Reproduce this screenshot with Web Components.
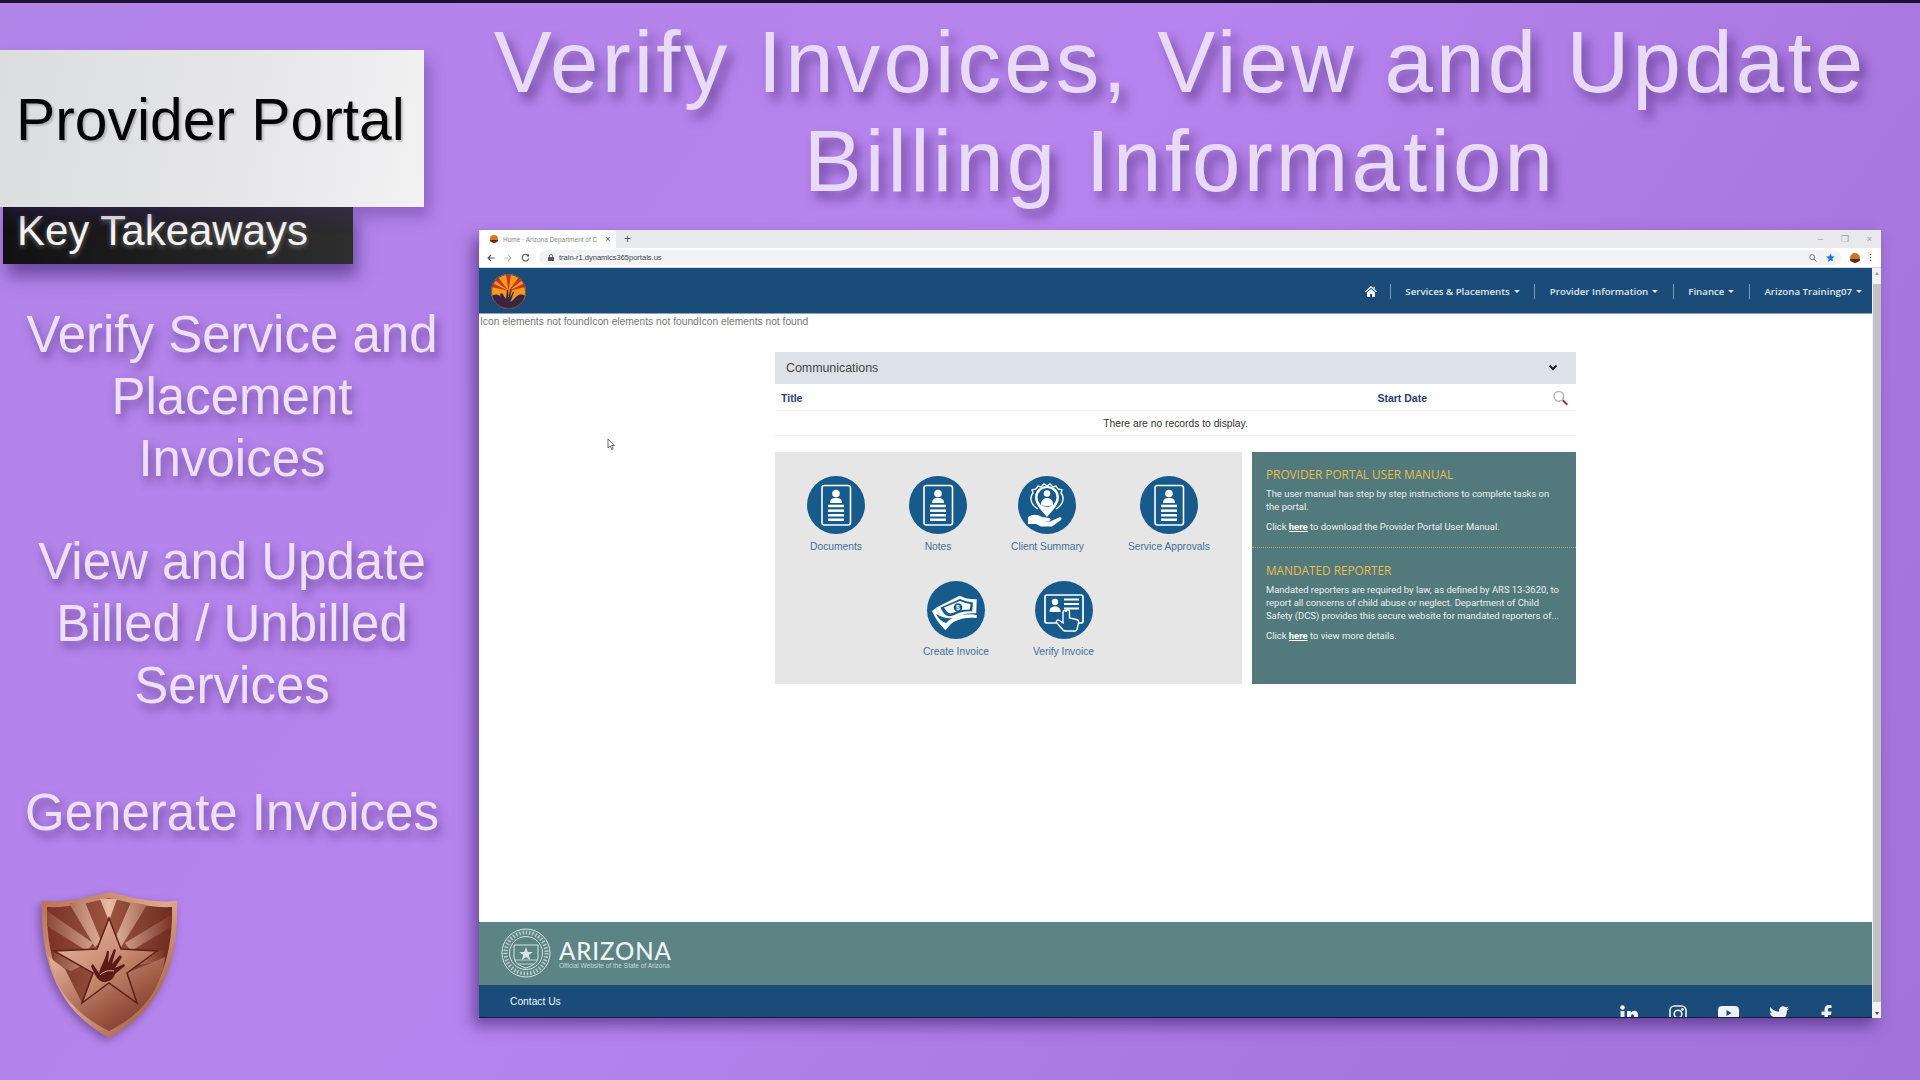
<!DOCTYPE html>
<html lang="en">
<head>
<meta charset="utf-8">
<title>Provider Portal - Verify Invoices</title>
<style>
  html, body { margin: 0; padding: 0; }
  body { width: 1920px; height: 1080px; overflow: hidden; font-family: "Liberation Sans", Arial, sans-serif; }
</style>
</head>
<body>
<slide-page>
  <brand-card slot="side"></brand-card>
  <takeaway-list slot="side">
    <p>Verify Service and<br>Placement<br>Invoices</p>
    <p>View and Update<br>Billed / Unbilled<br>Services</p>
    <p>Generate Invoices</p>
  </takeaway-list>
  <dcs-shield slot="side"></dcs-shield>

  <slide-title>Verify Invoices, View and Update<br>Billing Information</slide-title>
  <browser-window>
    <portal-nav></portal-nav>
    <portal-body>
      <comm-panel></comm-panel>
      <div class="row">
        <tile-board>
          <action-tile kind="doc">Documents</action-tile>
          <action-tile kind="doc">Notes</action-tile>
          <action-tile kind="client">Client Summary</action-tile>
          <action-tile kind="doc">Service Approvals</action-tile>
          <action-tile kind="cash">Create Invoice</action-tile>
          <action-tile kind="verify">Verify Invoice</action-tile>
        </tile-board>
        <info-panel></info-panel>
      </div>
    </portal-body>
    <portal-footer></portal-footer>
  </browser-window>
</slide-page>

<script>
class SlidePage extends HTMLElement {
  constructor() {
    super();
    this.attachShadow({ mode: 'open' });
    this.shadowRoot.innerHTML = /* html */ `
    <style>
      :host {
        display: grid;
        grid-template-columns: 464px 1fr;
        width: 1920px;
        height: 1080px;
        box-sizing: border-box;
        border-top: 3px solid #1c1230;
        overflow: hidden;
        background: linear-gradient(125deg, #b184e8 0%, #b684ee 45%, #a877e0 75%, #a273da 100%);
      }
      .side { display: flex; flex-direction: column; align-items: flex-start; }
      .main { display: flex; flex-direction: column; padding: 9px 24px 0 0; }
    </style>
    <div class="side"><slot name="side"></slot></div>
    <div class="main"><slot></slot></div>`;
  }
}

class BrandCard extends HTMLElement {
  constructor() {
    super();
    this.attachShadow({ mode: 'open' });
    this.shadowRoot.innerHTML = /* html */ `
    <style>
      :host { display: block; margin-top: 47px; }
      .top {
        width: 424px; height: 157px; box-sizing: border-box;
        padding: 0 0 18px 16px;
        display: flex; align-items: center;
        position: relative; z-index: 1;
        background: linear-gradient(100deg, #dcdddf 0%, #e6e6e8 55%, #f2f2f3 100%);
        box-shadow: 6px 10px 14px rgba(70, 40, 120, .35);
        color: #050505;
        font-size: 58.8px;
        text-shadow: 2px 2px 2px rgba(0, 0, 0, .2);
      }
      .sub {
        width: 350px; height: 57px; box-sizing: border-box;
        margin-left: 3px;
        padding: 0 0 10px 14px;
        display: flex; align-items: center;
        background: linear-gradient(90deg, #111 0%, #2e2e2e 100%);
        box-shadow: 4px 12px 16px rgba(50, 25, 100, .55);
        color: #f4f4f4;
        font-size: 42px;
        text-shadow: 0 2px 5px rgba(255, 255, 255, .35);
      }
    </style>
    <div class="top">Provider Portal</div>
    <div class="sub">Key Takeaways</div>`;
  }
}

class TakeawayList extends HTMLElement {
  constructor() {
    super();
    this.attachShadow({ mode: 'open' });
    this.shadowRoot.innerHTML = /* html */ `
    <style>
      :host {
        display: block;
        width: 464px;
        margin-top: 40px;
        text-align: center;
        color: #eee0fa;
        font-size: 51px;
        line-height: 62px;
        text-shadow: 3px 6px 10px rgba(60, 30, 100, .55);
      }
      ::slotted(p) { margin: 0 0 41px; }
      ::slotted(p:last-child) { margin: 65px 0 0; }
    </style>
    <slot></slot>`;
  }
}

class DcsShield extends HTMLElement {
  constructor() {
    super();
    this.attachShadow({ mode: 'open' });
    this.shadowRoot.innerHTML = /* html */ `
    <style>
      :host { display: block; margin: 47px 0 0 41px; width: 137px; height: 147px; filter: drop-shadow(-3px 3px 4px rgba(60,30,90,.45)); }
      svg { display: block; }
    </style>
    <svg width="137" height="147" viewBox="0 0 137 147">
      <defs>
        <linearGradient id="rim" x1="0" y1="0" x2="1" y2="1">
          <stop offset="0" stop-color="#b96f52"/><stop offset=".5" stop-color="#e0a88c"/><stop offset="1" stop-color="#8a3f2e"/>
        </linearGradient>
        <linearGradient id="ray" x1="0" y1="0" x2="1" y2="0">
          <stop offset="0" stop-color="#8a4a38"/><stop offset=".5" stop-color="#eabba5"/><stop offset="1" stop-color="#7a3527"/>
        </linearGradient>
        <linearGradient id="dark" x1="0" y1="0" x2="1" y2="0">
          <stop offset="0" stop-color="#7a3324"/><stop offset=".5" stop-color="#9a5540"/><stop offset="1" stop-color="#6e2c20"/>
        </linearGradient>
        <linearGradient id="star" x1="0" y1="0" x2="1" y2="1">
          <stop offset="0" stop-color="#e9bca8"/><stop offset=".55" stop-color="#c98a70"/><stop offset="1" stop-color="#8e4a36"/>
        </linearGradient>
        <linearGradient id="low" x1="0" y1="0" x2="1" y2="1">
          <stop offset="0" stop-color="#e3b39c"/><stop offset=".6" stop-color="#9e5a45"/><stop offset="1" stop-color="#6d2a20"/>
        </linearGradient>
      </defs>
      <path d="M1 10C24 12 45 7 68 1C92 7 113 12 136 10C138 70 122 118 68 147C16 118 -1 70 1 10Z" fill="url(#rim)"/>
      <path d="M6 16C28 17 46 12 68 7C90 12 110 17 131 16C132 70 116 114 68 140C21 114 5 70 6 16Z" fill="url(#dark)"/>
      <path d="M6 20L6 35L46 60L52 52Z M28 12L44 11L60 50L54 56Z M59 8L76 8L68 30Z M90 11L106 14L80 56L74 48Z M130 24L130 36L90 60L84 52Z" fill="url(#ray)"/>
      <path d="M13 62L50 70L30 80L13 72Z M123 58L123 70L98 74L100 68Z" fill="url(#ray)"/>
      <path d="M8 66L24 78L41 112L68 92L96 112L86 82L124 66C120 100 100 124 68 140C36 124 14 100 8 66Z" fill="url(#low)"/>
      <path d="M68 27L80 58L116 60L86 82L96 112L68 92L41 112L52 82L13 60L56 58Z" fill="url(#star)" stroke="#5e1f18" stroke-width="1.500"/>
      <path d="M52 73L58 82C60 74 64 70 66 60L68 60L67 72L73 58L75 59L71 73L79 64L81 66L74 77L83 73L84 75L74 83C72 89 68 91 62 91C56 89 54 84 50 75Z" fill="#5e1a14"/>
      <path d="M59 84C63 80 68 79 73 80" stroke="#e3b39c" stroke-width="1" fill="none"/>
    </svg>`;
  }
}

class SlideTitle extends HTMLElement {
  constructor() {
    super();
    this.attachShadow({ mode: 'open' });
    this.shadowRoot.innerHTML = /* html */ `
    <style>
      :host {
        display: block;
        text-align: center;
        color: #e9dbf8;
        font-size: 87px;
        line-height: 99px;
        letter-spacing: 3.2px;
        text-shadow: 6px 8px 11px rgba(60, 30, 100, .55);
        white-space: nowrap;
      }
    </style>
    <slot></slot>`;
  }
}

class BrowserWindow extends HTMLElement {
  constructor() {
    super();
    this.attachShadow({ mode: 'open' });
    this.shadowRoot.innerHTML = /* html */ `
    <style>
      :host {
        display: flex;
        flex-direction: column;
        width: 1402px;
        height: 788px;
        margin: 20px 0 0 15px;
        position: relative;
        background: #fff;
        box-shadow: -6px 8px 14px rgba(50, 25, 100, .55);
        font-family: "Liberation Sans", Arial, sans-serif;
      }
      .tabs { height: 18px; background: #e7e9ec; display: flex; align-items: stretch; padding-left: 1px; flex: none; }
      .tab {
        width: 136px; box-sizing: border-box; padding-left: 10px;
        display: flex; align-items: center; gap: 5px;
        background: #fff; border-radius: 4px 4px 0 0;
        font-size: 6.5px; color: #8a8a8a; white-space: nowrap;
      }
      .tab b { font-weight: 400; font-size: 9px; margin-left: 3px; color: #444; }
      .plus { margin-left: 8px; align-self: center; font-size: 12px; color: #555; }
      .winbtns { margin-left: auto; display: flex; gap: 18px; align-items: center; padding-right: 9px; color: #9a9a9a; font-size: 9px; }
      .bar { height: 20px; background: #fff; display: flex; align-items: center; flex: none; padding: 0 9px 0 8px; gap: 9px; border-bottom: 1px solid #d5d8dc; box-sizing: border-box; }
      .omni {
        flex: 1; height: 15px; background: #f1f3f4; border-radius: 8px;
        display: flex; align-items: center; gap: 5px; padding: 0 6px 0 9px;
        font-size: 7.5px; color: #444;
      }
      .omni .tail { margin-left: auto; display: flex; gap: 9px; align-items: center; }
      .view { flex: 1; display: flex; min-height: 0; }
      .page { flex: 1; display: flex; flex-direction: column; min-width: 0; }
      .scroll { width: 9px; background: #f1f1f1; display: flex; flex-direction: column; align-items: center; flex: none; }
      .scroll .thumb { width: 8px; height: 718px; margin-top: 9px; background: #c1c1c1; }
      .scroll .up, .scroll .dn { width: 0; height: 0; border-left: 2px solid transparent; border-right: 2px solid transparent; }
      .scroll .up { border-bottom: 3px solid #9a9a9a; margin-top: 4px; }
      .scroll .dn { border-top: 3px solid #505050; margin-top: auto; margin-bottom: 3px; }
    </style>
    <div class="tabs">
      <div class="tab">
        <svg width="8" height="8" viewBox="0 0 8 8"><circle cx="4" cy="4" r="4" fill="#d8741c"/><path d="M0 5h8v1L4 8L0 6Z" fill="#5a2a2a"/></svg>
        <span>Home · Arizona Department of C</span><b>×</b>
      </div>
      <span class="plus">+</span>
      <div class="winbtns"><span>–</span><span>❐</span><span>×</span></div>
    </div>
    <div class="bar">
      <svg width="8" height="8" viewBox="0 0 8 8"><path d="M7.500 4H1M4 1L1 4l3 3" stroke="#555" stroke-width="1.100" fill="none"/></svg>
      <svg width="8" height="8" viewBox="0 0 8 8"><path d="M.5 4H7M4 1l3 3-3 3" stroke="#bbb" stroke-width="1.100" fill="none"/></svg>
      <svg width="9" height="9" viewBox="0 0 9 9"><path d="M7.500 3A3.300 3.300 0 1 0 7.800 5.500" stroke="#555" stroke-width="1.100" fill="none"/><path d="M8 .8V3.600H5.200Z" fill="#555"/></svg>
      <div class="omni">
        <svg width="6" height="7" viewBox="0 0 6 7"><rect y="3" width="6" height="4" rx=".6" fill="#555"/><path d="M1.400 3V2a1.600 1.600 0 0 1 3.200 0v1" stroke="#555" fill="none" stroke-width=".8"/></svg>
        <span>train-r1.dynamics365portals.us</span>
        <span class="tail">
          <svg width="8" height="8" viewBox="0 0 8 8"><circle cx="3.200" cy="3.200" r="2.500" stroke="#777" fill="none"/><path d="M5 5l2.500 2.500" stroke="#777"/></svg>
          <svg width="9" height="9" viewBox="0 0 10 10"><path d="M5 .5l1.400 3 3.100.4-2.300 2.100.6 3.200L5 8.100 2.200 9.700l.6-3.200L.5 3.900l3.100-.4Z" fill="#1a73e8"/></svg>
        </span>
      </div>
      <svg width="10" height="10" viewBox="0 0 10 10"><circle cx="5" cy="5" r="5" fill="#c9741f"/><path d="M0 6h10v1.500L5 10 0 7.500Z" fill="#4a2a2a"/></svg>
      <svg width="3" height="9" viewBox="0 0 3 9"><circle cx="1.500" cy="1.500" r=".8" fill="#666"/><circle cx="1.500" cy="4.500" r=".8" fill="#666"/><circle cx="1.500" cy="7.500" r=".8" fill="#666"/></svg>
    </div>
    <div class="view">
      <div class="page"><slot></slot></div>
      <div class="scroll"><i class="up"></i><i class="thumb"></i><i class="dn"></i></div>
    </div>`;
  }
}

class PortalNav extends HTMLElement {
  constructor() {
    super();
    this.attachShadow({ mode: 'open' });
    this.shadowRoot.innerHTML = /* html */ `
    <style>
      :host {
        display: flex; align-items: center; flex: none;
        height: 46px; box-sizing: border-box;
        padding: 1px 10px 0 12px;
        background: #1b4b78;
        border-bottom: 1px solid #8ea3b8;
        font-family: "Open Sans", sans-serif;
        font-size: 9.7px;
        font-weight: 600;
        color: #dfe8f0;
      }
      .links { margin-left: auto; display: flex; align-items: center; }
      .links > * { display: flex; align-items: center; height: 15px; padding: 0 14.500px; border-left: 1px solid #7d99b4; gap: 4px; white-space: nowrap; }
      .links > :first-child { border-left: 0; padding: 0 13px 0 0; }
      .links > :last-child { padding-right: 0; }
      .caret { width: 0; height: 0; border-left: 3px solid transparent; border-right: 3px solid transparent; border-top: 3px solid #dfe8f0; }
    </style>
    <svg width="35" height="35" viewBox="0 0 35 35">
      <circle cx="17.500" cy="17.500" r="17.500" fill="#f39a1e"/>
      <path d="M17.500 17L15 .5h5ZM17.500 17L7 3l-3.500 3ZM17.500 17L28 3l3.500 3ZM17.500 17L.5 13l.8-4ZM17.500 17L34.500 13l-.8-4Z" fill="#c8361f"/>
      <path d="M1 22C5 19 9 21 12 25C15 29 20 29 23 25C26 21 30 19 34 22C32 30 25 35 17.500 35C10 35 3 30 1 22Z" fill="#3b2440"/>
      <path d="M11 19l4 6 1-9 1.200 0 .3 7 2-8 1.200.4-1.600 8 3-6 1 .5-3 8c-1 3-3 5-6 5-3-1-4-6-5-11Z" fill="#3b2440"/>
      <circle cx="17.500" cy="17.500" r="17" fill="none" stroke="#6b4a52" stroke-width="1"/>
    </svg>
    <div class="links">
      <span><svg width="12" height="11" viewBox="0 0 12 11"><path d="M6 0l6 5.500-.8.8L6 1.700.8 6.300 0 5.500Z M2 6.500L6 3l4 3.500V11H7V8H5v3H2Z M8.500 .8H10V3L8.500 1.800Z" fill="#fff"/></svg></span>
      <span>Services &amp; Placements<i class="caret"></i></span>
      <span>Provider Information<i class="caret"></i></span>
      <span>Finance<i class="caret"></i></span>
      <span>Arizona Training07<i class="caret"></i></span>
    </div>`;
  }
}

class PortalBody extends HTMLElement {
  constructor() {
    super();
    this.attachShadow({ mode: 'open' });
    this.shadowRoot.innerHTML = /* html */ `
    <style>
      :host {
        display: block; flex: 1; position: relative;
        font-family: "Liberation Sans", Arial, sans-serif;
        background: #fff;
      }
      .warn { height: 12px; padding-top: 2px; line-height: 12px; font-size: 10.25px; color: #777; padding-left: 1px; }
      .center { width: 801px; margin: 24px 0 0 296px; }
      ::slotted(.row) { display: flex; gap: 10px; margin-top: 16px; }
      .cursor { position: absolute; left: 128px; top: 124px; }
    </style>
    <div class="warn">Icon elements not foundIcon elements not foundIcon elements not found</div>
    <div class="center"><slot></slot></div>
    <svg class="cursor" width="9" height="13" viewBox="0 0 9 13"><path d="M1 1v9l2.200-2 1.600 3.500 1.400-.6L4.600 7.500H7.500Z" fill="#fff" stroke="#444" stroke-width=".8"/></svg>`;
  }
}

class CommPanel extends HTMLElement {
  constructor() {
    super();
    this.attachShadow({ mode: 'open' });
    this.shadowRoot.innerHTML = /* html */ `
    <style>
      :host { display: block; font-size: 10.3px; }
      .head {
        height: 32px; box-sizing: border-box; padding: 0 18px 1px 11px;
        display: flex; align-items: center; justify-content: space-between;
        background: #dde2ea; color: #444; font-size: 12.4px;
      }
      .cols {
        height: 27px; box-sizing: border-box; padding: 2px 7px 0 6px;
        display: flex; align-items: center;
        border-bottom: 1px solid #f1f1f1;
        color: #2c3b78; font-weight: 700; font-size: 10.5px;
      }
      .cols .date { margin-left: 575px; }
      .cols svg { margin-left: auto; }
      .none { height: 24px; line-height: 26px; text-align: center; color: #333; border-bottom: 1px solid #f1f1f1; }
    </style>
    <div class="head">
      <span>Communications</span>
      <svg width="10" height="7" viewBox="0 0 10 7"><path d="M1.500 1.500L5 5l3.500-3.500" stroke="#15203a" stroke-width="2" fill="none"/></svg>
    </div>
    <div class="cols">
      <span>Title</span><span class="date">Start Date</span>
      <svg width="17" height="16" viewBox="0 0 15 14"><circle cx="6" cy="5.500" r="4.300" fill="#fff" stroke="#b9b9b9" stroke-width="1.400"/><path d="M9.500 9l4 4" stroke="#a8324f" stroke-width="1.800"/></svg>
    </div>
    <div class="none">There are no records to display.</div>`;
  }
}

class TileBoard extends HTMLElement {
  constructor() {
    super();
    this.attachShadow({ mode: 'open' });
    this.shadowRoot.innerHTML = /* html */ `
    <style>
      :host {
        display: flex; flex-wrap: wrap; justify-content: center; align-content: flex-start;
        gap: 0 44px;
        width: 467px; height: 232px; box-sizing: border-box;
        padding: 24px 0 0;
        background: #e6e6e6;
      }
    </style>
    <slot></slot>`;
  }
}

const TILE_ICONS = {
  doc: `
    <rect x="15" y="9.500" width="28.500" height="39.500" rx="2.500" fill="none" stroke="#fff" stroke-width="1.600"/>
    <circle cx="29" cy="17.500" r="3.800" fill="#fff"/>
    <path d="M23 27c0-4 2.500-5 6-5s6 1 6 5Z" fill="#fff"/>
    <rect x="21" y="28.700" width="16" height="2.500" fill="#fff"/>
    <rect x="21" y="33.400" width="16" height="2.500" fill="#fff"/>
    <rect x="21" y="38" width="16" height="2.500" fill="#fff"/>
    <rect x="21" y="42.500" width="16" height="2.500" fill="#fff"/>`,
  client: `
    <path d="M20 33C13 29 11 22 15 17l-1-3 4-1 2-3 3 1 3-3 3 2 3-2 3 3 3-1 2 3 4 1-1 3c4 5 2 12-5 16" fill="none" stroke="#fff" stroke-width="1.400"/>
    <path d="M29 10c7.500 0 12 5 12 11.500C41 29 33 36 29 41C25 36 17 29 17 21.500C17 15 21.500 10 29 10Z" fill="#fff"/>
    <circle cx="29" cy="21.500" r="9.500" fill="#175a8c"/>
    <circle cx="29" cy="17.500" r="3.300" fill="#fff"/>
    <path d="M23 29c0-5 2.500-7 6-7s6 2 6 7c-3 1.500-9 1.500-12 0Z" fill="#fff"/>
    <path d="M10 41c5-3 9-3 14 0l7 1c2 0 2 2.500 0 3l-6 0 7 .5 9-4c2-.8 3.500 1 2 2.500l-9 6.500H23l-5-2.500h-8Z" fill="#fff"/>`,
  cash: `
    <path d="M9 26l24-11c5 3 11 4 17 4l-1 14C40 32 33 34 27 37c-6 3-13 4-18-11Z" fill="#fff" transform="rotate(-2 29 26)"/>
    <path d="M13.500 26.500L33 18c4 2 9 3 13 3.400l-.8 9C38 30 32 31.500 26 34.500c-5 2-9 0-12.500-8Z" fill="#175a8c"/>
    <path d="M17 26.500L33 20c3.500 1.500 7 2.500 10.500 3l-.6 5.500C36 28.500 31 29.500 25.500 32 22 33.500 19.500 31 17 26.500Z" fill="#fff"/>
    <circle cx="31" cy="26.500" r="4.300" fill="#175a8c"/>
    <text x="31" y="29" font-size="7" font-weight="700" fill="#fff" text-anchor="middle" font-family="Liberation Sans">$</text>
    <path d="M5 30l4-3c3 8 8 13 17 10 7-3 15-5 24-3l-.5 3c-9-1-16 .5-23 4-3 2-6 6-8 8C14 45 9 39 5 30Z" fill="#fff"/>
    <path d="M9 33c3 5 6 8 10 9 2-2 4-4 7-5-5 1-11-.5-17-4Z" fill="#175a8c"/>`,
  verify: `
    <rect x="10" y="14" width="38" height="28" rx="2" fill="none" stroke="#fff" stroke-width="1.700"/>
    <circle cx="20" cy="21" r="3.200" fill="#fff"/>
    <path d="M14.500 31c0-4 2-5.500 5.500-5.500s5.500 1.500 5.500 5.500Z" fill="#fff"/>
    <rect x="29" y="17.500" width="15" height="2" fill="#fff"/>
    <rect x="29" y="22" width="15" height="2" fill="#fff"/>
    <rect x="29" y="26.500" width="15" height="2" fill="#fff"/>
    <path d="M30 33c0-3 3.500-3 3.500 0v6l7 1.500c2 .5 2.500 1.500 2 3.500l-1.500 6.500c-.5 1-1 1.500-2 1.500H29c-1 0-1.500-.5-2-1l-6-7c-1.500-2 .5-4 2.500-2.500L27 44V33c0-2 3-2 3 0Z" transform="translate(1 -2)" fill="#175a8c" stroke="#fff" stroke-width="1.400"/>`
};

class ActionTile extends HTMLElement {
  constructor() {
    super();
    this.attachShadow({ mode: 'open' });
    this.kind = this.getAttribute('kind');
    this.shadowRoot.innerHTML = /* html */ `
    <style>
      :host {
        display: flex; flex-direction: column; align-items: center;
        min-width: 58px; height: 105px;
        font-size: 10.25px; color: #3f6f9c; white-space: nowrap;
      }
      svg { display: block; margin-bottom: 7px; }
    </style>
    <svg width="58" height="58" viewBox="0 0 58 58"><circle cx="29" cy="29" r="29" fill="#175a8c"/>${TILE_ICONS[this.kind]}</svg>
    <slot></slot>`;
  }
}

class InfoPanel extends HTMLElement {
  constructor() {
    super();
    this.attachShadow({ mode: 'open' });
    this.shadowRoot.innerHTML = /* html */ `
    <style>
      :host {
        display: block; width: 324px; height: 232px; box-sizing: border-box;
        background: #527a7c; color: #eaf0f0;
        font-family: Roboto, sans-serif; font-size: 9.45px; line-height: 13px;
      }
      section { padding: 14px 14px 0; height: 95px; box-sizing: border-box; }
      section + section { border-top: 1px dotted #b5a968; height: auto; padding-top: 14px; }
      h3 { margin: 0 0 5px; font-family: "Open Sans", sans-serif; font-weight: 400; font-size: 11.8px; line-height: 16px; color: #e9bd4c; text-transform: uppercase; }
      p { margin: 0 0 7px; }
      a { color: #fff; font-weight: 700; text-decoration: underline; }
    </style>
    <section>
      <h3>Provider Portal User Manual</h3>
      <p>The user manual has step by step instructions to complete tasks on the portal.</p>
      <p>Click <a>here</a> to download the Provider Portal User Manual.</p>
    </section>
    <section>
      <h3>Mandated Reporter</h3>
      <p>Mandated reporters are required by law, as defined by ARS 13-3620, to report all concerns of child abuse or neglect. Department of Child Safety (DCS) provides this secure website for mandated reporters of...</p>
      <p>Click <a>here</a> to view more details.</p>
    </section>`;
  }
}

class PortalFooter extends HTMLElement {
  constructor() {
    super();
    this.attachShadow({ mode: 'open' });
    this.shadowRoot.innerHTML = /* html */ `
    <style>
      :host { display: block; flex: none; font-family: "Liberation Sans", Arial, sans-serif; border-bottom: 1px solid #1a1a3c; }
      .state {
        height: 63px; box-sizing: border-box; padding: 6px 0 0 22px;
        display: flex; gap: 8px;
        background: #5d8484; color: #eef4f4;
      }
      .word { display: flex; flex-direction: column; padding-top: 12px; }
      .word b { font-family: "Lato", sans-serif; font-weight: 500; font-size: 24px; line-height: 22px; letter-spacing: .9px; }
      .word span { font-size: 6.500px; line-height: 8px; color: #c5d6d6; }
      .links {
        height: 32px; box-sizing: border-box; padding: 0 0 0 31px;
        display: flex; overflow: hidden;
        background: #1b4b78; color: #f2f6fa; font-size: 10.25px;
      }
      .links > span { line-height: 33px; width: 1198px; flex: none; }
      .links svg { margin-top: 20px; flex: none; }
      .social { display: flex; gap: 31px; margin-left: -88px; }
    </style>
    <div class="state">
      <svg width="50" height="50" viewBox="0 0 50 50" fill="none" stroke="#d7e4e4">
        <circle cx="25" cy="25" r="24"/>
        <circle cx="25" cy="25" r="16.500"/>
        <circle cx="25" cy="25" r="20.500" stroke-width="4" stroke-dasharray="1.500 1.800" opacity=".75"/>
        <path d="M13 17h24v12c0 6-6 9-12 11-6-2-12-5-12-11Z" stroke-width="1"/>
        <path d="M25 19l1.800 5h5l-4 3 1.500 5-4.300-3-4.300 3 1.500-5-4-3h5Z" fill="#d7e4e4" stroke="none"/>
        <path d="M14 32h22M17 36h16" stroke-width=".8"/>
      </svg>
      <div class="word"><b>ARIZONA</b><span>Official Website of the State of Arizona</span></div>
    </div>
    <div class="links">
      <span>Contact Us</span>
      <div class="social">
        <svg width="18" height="18" viewBox="0 0 18 18" fill="#eef2f6"><circle cx="2.500" cy="2.500" r="2.300"/><rect x=".5" y="6" width="4" height="12"/><path d="M7 6h3.800v1.800C11.500 6.500 13 5.700 14.500 5.700c3 0 3.500 2.200 3.500 5V18h-4v-6.300c0-1.500-.3-2.500-1.500-2.500S11 10.300 11 11.700V18H7Z"/></svg>
        <svg width="18" height="18" viewBox="0 0 18 18" fill="none" stroke="#eef2f6" stroke-width="1.600"><rect x="1" y="1" width="16" height="16" rx="4.500"/><circle cx="9" cy="9" r="3.800"/><circle cx="13.500" cy="4.500" r=".6" fill="#eef2f6"/></svg>
        <svg width="21" height="18" viewBox="0 0 21 18"><rect width="21" height="15" y="1" rx="4" fill="#eef2f6"/><path d="M8.500 5v6l5-3Z" fill="#1b4b78"/></svg>
        <svg width="20" height="18" viewBox="0 0 20 18"><path d="M0 2c2.500 3 5.500 4.500 9 4.700C8.500 3 12 0 15 2c1 .4 2.500 0 3.500-.6-.3 1.200-1 2-2 2.700 1 0 1.900-.3 2.700-.7-.6 1-1.500 1.800-2.400 2.400C17 12 12 18 5 18c-2 0-3.800-.6-5-1.500 2.200.2 4-.4 5.500-1.500C3.500 14.800 2 13.700 1.500 12c.7.1 1.400.1 2 0C1.300 11.300 0 9.500 0 7.500c.6.3 1.300.5 2 .5C0 6.500-.4 4 0 2Z" fill="#eef2f6"/></svg>
        <svg width="11" height="18" viewBox="0 0 11 18"><path d="M7 18V10h3l.5-3.500H7V4.500C7 3.500 7.400 3 8.500 3H10.500V.2C10 .1 9 0 8 0 5.300 0 3.500 1.600 3.500 4.200V6.500H.5V10h3v8Z" fill="#eef2f6"/></svg>
      </div>
    </div>`;
  }
}

customElements.define('slide-page', SlidePage);
customElements.define('brand-card', BrandCard);
customElements.define('takeaway-list', TakeawayList);
customElements.define('dcs-shield', DcsShield);
customElements.define('slide-title', SlideTitle);
customElements.define('browser-window', BrowserWindow);
customElements.define('portal-nav', PortalNav);
customElements.define('portal-body', PortalBody);
customElements.define('comm-panel', CommPanel);
customElements.define('tile-board', TileBoard);
customElements.define('action-tile', ActionTile);
customElements.define('info-panel', InfoPanel);
customElements.define('portal-footer', PortalFooter);
</script>
</body>
</html>
